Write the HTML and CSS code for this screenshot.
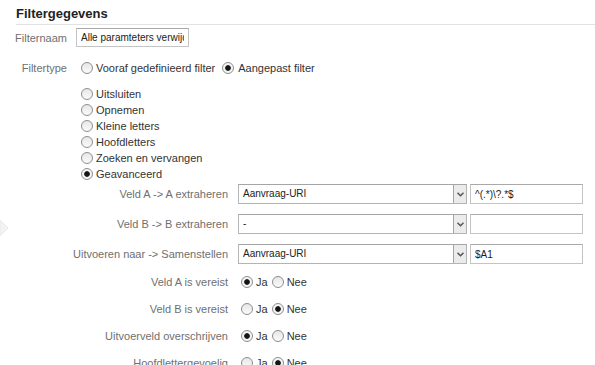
FILE: index.html
```html
<!DOCTYPE html>
<html lang="nl">
<head>
<meta charset="utf-8">
<title>Filtergegevens</title>
<link rel="stylesheet" href="styles.css">
</head>
<body>
<div class="page">
  <svg class="side-arrow" width="9" height="16" viewBox="0 0 9 16"><path d="M0 0 L8 8 L0 16 Z" fill="#f3f3f3" stroke="#e9e9e9" stroke-width="1"/></svg>

  <h2 class="title">Filtergegevens</h2>

  <div class="row name-row">
    <label class="lbl">Filternaam</label>
    <input class="text" type="text" value="Alle paramteters verwijderen">
  </div>

  <div class="row type-row">
    <span class="lbl">Filtertype</span>
    <label class="opt"><input class="radio" type="radio" name="ft">Vooraf gedefinieerd filter</label>
    <label class="opt opt-2"><input class="radio" type="radio" name="ft" checked>Aangepast filter</label>
  </div>

  <div class="kinds">
    <label class="opt"><input class="radio" type="radio" name="k">Uitsluiten</label>
    <label class="opt"><input class="radio" type="radio" name="k">Opnemen</label>
    <label class="opt"><input class="radio" type="radio" name="k">Kleine letters</label>
    <label class="opt"><input class="radio" type="radio" name="k">Hoofdletters</label>
    <label class="opt"><input class="radio" type="radio" name="k">Zoeken en vervangen</label>
    <label class="opt"><input class="radio" type="radio" name="k" checked>Geavanceerd</label>
  </div>

  <div class="adv">
    <div class="arow field">
      <span class="alabel">Veld A -&gt; A extraheren</span>
      <div class="select"><span class="sval">Aanvraag-URI</span><span class="sarrow"><svg width="7" height="5" viewBox="0 0 7 5"><path d="M0.5 0.8 L3.5 3.8 L6.5 0.8" fill="none" stroke="#555" stroke-width="1.5"/></svg></span></div>
      <input class="text small" type="text" value="^(.*)\?.*$">
    </div>
    <div class="arow field">
      <span class="alabel">Veld B -&gt; B extraheren</span>
      <div class="select"><span class="sval">-</span><span class="sarrow"><svg width="7" height="5" viewBox="0 0 7 5"><path d="M0.5 0.8 L3.5 3.8 L6.5 0.8" fill="none" stroke="#555" stroke-width="1.5"/></svg></span></div>
      <input class="text small" type="text" value="">
    </div>
    <div class="arow field">
      <span class="alabel">Uitvoeren naar -&gt; Samenstellen</span>
      <div class="select"><span class="sval">Aanvraag-URI</span><span class="sarrow"><svg width="7" height="5" viewBox="0 0 7 5"><path d="M0.5 0.8 L3.5 3.8 L6.5 0.8" fill="none" stroke="#555" stroke-width="1.5"/></svg></span></div>
      <input class="text small" type="text" value="$A1">
    </div>

    <div class="arow yn first-yn">
      <span class="alabel">Veld A is vereist</span>
      <label class="opt yes"><input class="radio" type="radio" name="a" checked>Ja</label>
      <label class="opt"><input class="radio" type="radio" name="a">Nee</label>
    </div>
    <div class="arow yn">
      <span class="alabel">Veld B is vereist</span>
      <label class="opt yes"><input class="radio" type="radio" name="b">Ja</label>
      <label class="opt"><input class="radio" type="radio" name="b" checked>Nee</label>
    </div>
    <div class="arow yn">
      <span class="alabel">Uitvoerveld overschrijven</span>
      <label class="opt yes"><input class="radio" type="radio" name="c" checked>Ja</label>
      <label class="opt"><input class="radio" type="radio" name="c">Nee</label>
    </div>
    <div class="arow yn">
      <span class="alabel">Hoofdlettergevoelig</span>
      <label class="opt yes"><input class="radio" type="radio" name="d">Ja</label>
      <label class="opt"><input class="radio" type="radio" name="d" checked>Nee</label>
    </div>
  </div>
</div>
</body>
</html>
```

FILE: styles.css
```css
html, body {
  margin: 0;
  padding: 0;
  background: #fff;
}
body {
  font-family: "Liberation Sans", Arial, sans-serif;
  font-size: 11px;
  color: #333;
  height: 365px;
  overflow: hidden;
}
.page {
  position: relative;
}
.side-arrow {
  position: absolute;
  left: 0;
  top: 220px;
}
.title {
  margin: 0 0 0 16px;
  padding: 7px 0 3px;
  font-size: 13px;
  line-height: 14px;
  font-weight: bold;
  color: #222;
  border-bottom: 1px solid #e2e2e2;
}
.row {
  display: flex;
  align-items: center;
}
.lbl {
  width: 67px;
  text-align: right;
  color: #6f6f6f;
  flex: none;
}
.name-row {
  margin-top: 3px;
  height: 19px;
  gap: 9px;
}
.text {
  box-sizing: border-box;
  width: 113px;
  height: 19px;
  margin: 0;
  padding: 0 4px;
  border: 1px solid #c4c4c4;
  border-top-color: #a9a9a9;
  font-family: "Liberation Sans", Arial, sans-serif;
  font-size: 10px;
  color: #222;
  background: #fff;
  outline: none;
}
.text.small {
  height: 20px;
}
.type-row {
  margin-top: 11px;
  height: 20px;
  gap: 14px;
}
.opt {
  display: flex;
  align-items: center;
  gap: 3px;
  color: #333;
  line-height: 16px;
  white-space: nowrap;
}
.opt-2 {
  margin-left: -7px;
  gap: 4px;
}
.radio {
  -webkit-appearance: none;
  appearance: none;
  box-sizing: border-box;
  width: 12px;
  height: 12px;
  margin: 0;
  border: 1px solid #8e8e8e;
  border-radius: 50%;
  background: linear-gradient(#e6e6e6, #fbfbfb);
  flex: none;
}
.radio:checked {
  background: radial-gradient(circle, #151515 0, #151515 2.4px, #f2f2f2 3.2px, #fbfbfb 100%);
}
.kinds {
  display: flex;
  flex-direction: column;
  padding-left: 81px;
  margin-top: 8px;
}
.adv {
  display: flex;
  flex-direction: column;
  margin-top: 2px;
}
.arow {
  display: flex;
  align-items: center;
  height: 20px;
}
.alabel {
  width: 228px;
  flex: none;
  text-align: right;
  color: #6f6f6f;
  margin-right: 10px;
}
.field + .field {
  margin-top: 10px;
}
.select {
  box-sizing: border-box;
  width: 229px;
  height: 20px;
  display: flex;
  align-items: stretch;
  border: 1px solid #b4b4b4;
  border-top-color: #a5a5a5;
  background: #fff;
  margin-right: 3px;
}
.sval {
  flex: 1;
  padding-left: 4px;
  font-size: 10px;
  line-height: 18px;
  color: #222;
}
.sarrow {
  width: 12px;
  border-left: 1px solid #a6a6a6;
  background: #ebebeb;
  display: flex;
  align-items: center;
  justify-content: center;
}
.first-yn {
  margin-top: 8px;
}
.yn + .yn {
  margin-top: 7px;
}
.yn .alabel {
  margin-right: 13px;
}
.yes {
  margin-right: 4px;
}
```
